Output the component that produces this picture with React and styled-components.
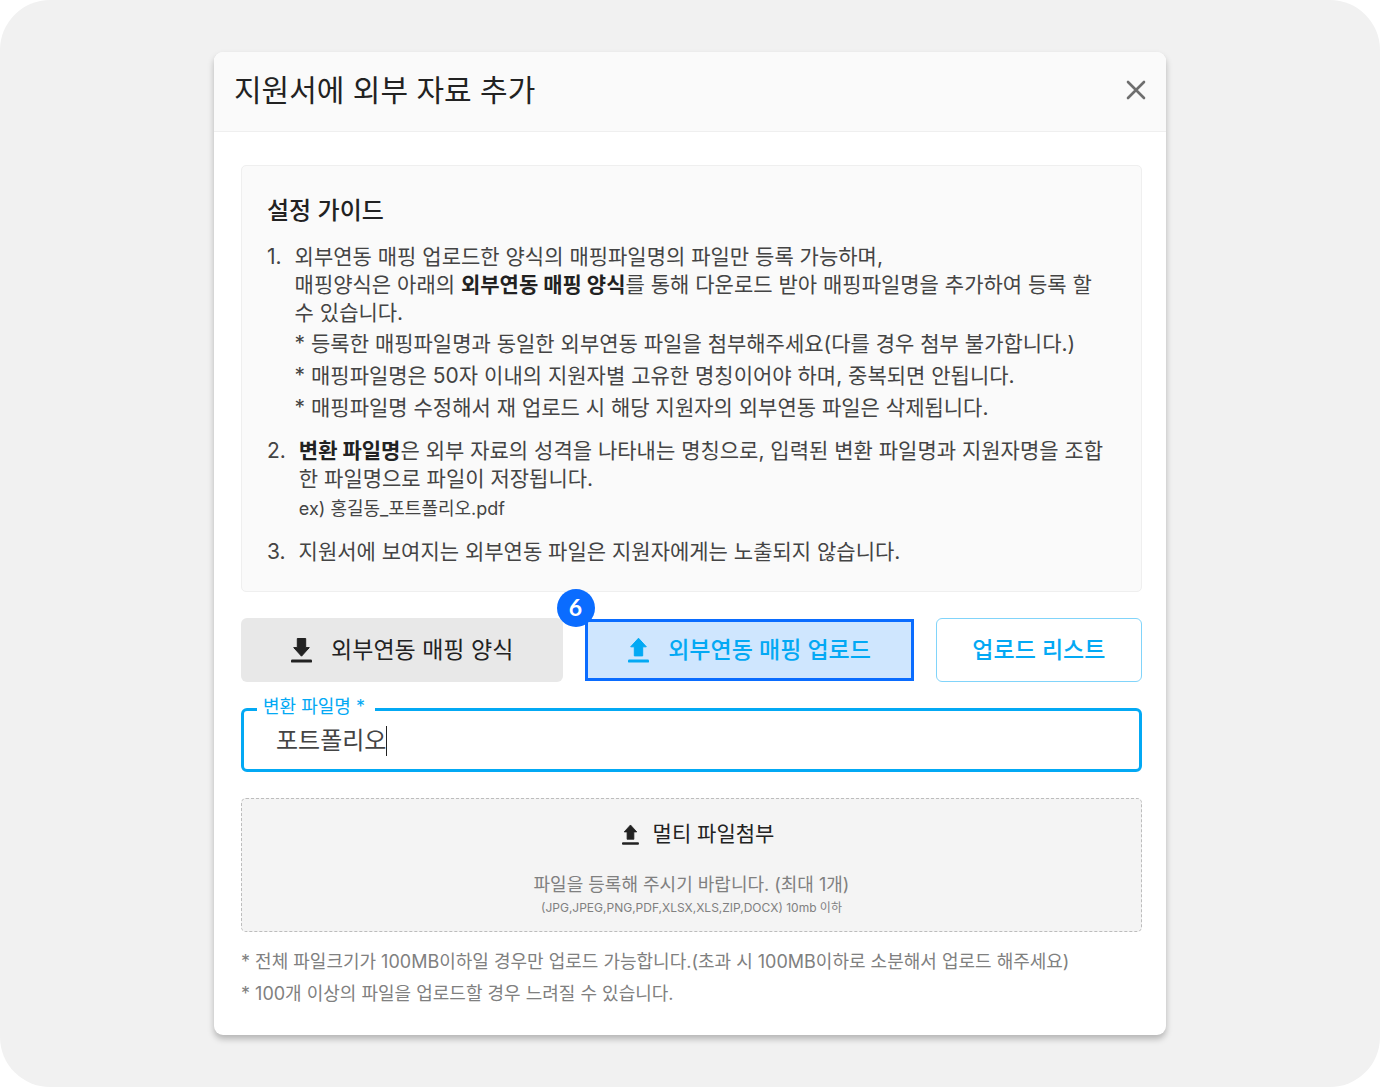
import React, { useState } from "react";
import styled, { createGlobalStyle } from "styled-components";

const GlobalStyle = createGlobalStyle`
  *, *::before, *::after { box-sizing: border-box; }
  body {
    margin: 0;
    background: #fff;
    color: #444;
    font-family: Inter, "Noto Sans CJK KR", sans-serif;
  }
  button, input { font-family: inherit; }
  h1, h2, p, ol { margin: 0; padding: 0; }
`;

const Backdrop = styled.main`
  display: flex;
  justify-content: center;
  align-items: flex-start;
  min-height: 100vh;
  padding: 52px 24px;
  border-radius: 50px;
  background: #f1f1f1;
`;

const Dialog = styled.section`
  width: 100%;
  max-width: 952px;
  border-radius: 9px;
  background: #fff;
  box-shadow: 0 4px 6px rgba(0, 0, 0, 0.25);
`;

const Header = styled.header`
  display: flex;
  justify-content: space-between;
  align-items: center;
  height: 80px;
  padding: 0 14px 4px 20px;
  border-bottom: 1px solid #efefef;
  border-radius: 9px 9px 0 0;
  background: #fafafa;
`;

const Title = styled.h1`
  color: #222;
  font-size: 30px;
  line-height: 40px;
  font-weight: 400;
`;

const CloseButton = styled.button`
  display: flex;
  padding: 4px;
  border: 0;
  background: none;
  color: #6e6e6e;
  cursor: pointer;
`;

const Body = styled.div`
  display: flex;
  flex-direction: column;
  gap: 26px;
  padding: 33px 24px 25px 27px;
`;

const Guide = styled.section`
  padding: 29px 25px 25px;
  border: 1px solid #efefef;
  border-radius: 5px;
  background: #fafafa;
`;

const GuideTitle = styled.h2`
  margin-bottom: 16px;
  color: #222;
  font-size: 24px;
  line-height: 32px;
  font-weight: 500;
`;

const Steps = styled.ol`
  display: flex;
  flex-direction: column;
  gap: 13px;
  list-style: none;
`;

const Step = styled.li`
  display: flex;
  gap: 13px;
  font-size: 21px;
  line-height: 28px;

  b { color: #222; font-weight: 700; }
`;

const Notes = styled.div`
  margin-top: 1px;
`;

const Note = styled.p`
  font-size: ${(p) => (p.$small ? "18px" : "21px")};
  line-height: 32px;
`;

const Actions = styled.div`
  display: grid;
  grid-template-columns: 322fr 328fr 206fr;
  align-items: center;
  gap: 22px;
`;

const variants = {
  filled: `
    height: 64px;
    border: 0;
    background: #e8e8e8;
    color: #222;
    font-weight: 400;
  `,
  marked: `
    height: 62px;
    border: 3px solid #0a6cff;
    border-radius: 0;
    background: #cfe6fe;
  `,
  outlined: `
    height: 64px;
    border: 1px solid #81d4fa;
    background: #fff;
  `,
};

const ActionButton = styled.button`
  position: relative;
  display: flex;
  justify-content: center;
  align-items: center;
  gap: 19px;
  padding: 0;
  border-radius: 6px;
  color: #03a9f4;
  font-size: 23px;
  line-height: 32px;
  font-weight: 500;
  white-space: nowrap;
  cursor: pointer;
  ${(p) => variants[p.$variant]}
`;

const Badge = styled.span`
  position: absolute;
  top: -33px;
  left: -31px;
  width: 38px;
  height: 38px;
  padding-right: 2px;
  border-radius: 50%;
  background: #0a6cff;
  color: #fff;
  font: 700 23px/37px Lato, sans-serif;
  text-align: center;
`;

const Field = styled.div`
  position: relative;
  display: flex;
  align-items: center;
  height: 64px;
  padding: 2px 32px 0;
  border: 3px solid #03a9f4;
  border-radius: 6px;
  cursor: text;
`;

const FieldLabel = styled.label`
  position: absolute;
  top: -16px;
  left: 13px;
  padding: 0 10px 0 6px;
  background: #fff;
  color: #03a9f4;
  font-size: 18px;
  line-height: 24px;
`;

const FieldInput = styled.input`
  field-sizing: content;
  padding: 0;
  border: 0;
  outline: 0;
  background: none;
  color: #444;
  caret-color: transparent;
  font-size: 24px;
  line-height: 32px;
`;

const Caret = styled.span`
  width: 1px;
  height: 30px;
  background: #222;
`;

const DropZone = styled.div`
  display: flex;
  flex-direction: column;
  align-items: center;
  padding: 19px 0 12px;
  border: 1px dashed #bdbdbd;
  border-radius: 5px;
  background: #f4f4f4;
  color: #808080;
`;

const AttachButton = styled.button`
  display: flex;
  align-items: center;
  gap: 14px;
  margin-bottom: 23px;
  padding: 0 0 0 13px;
  border: 0;
  background: none;
  color: #222;
  font-size: 21px;
  line-height: 32px;
  font-weight: 400;
  cursor: pointer;
`;

const Hint = styled.p`
  font-size: ${(p) => (p.$small ? "12px" : "18px")};
  line-height: ${(p) => (p.$small ? "22px" : "24px")};
`;

const Footnotes = styled.div`
  margin-top: -12px;
  color: #808080;
  font-size: 18px;
  line-height: 32px;
`;

function CloseIcon() {
  return (
    <svg width="24" height="24" viewBox="0 0 24 24" fill="none" stroke="currentColor" strokeWidth="2.6" strokeLinecap="round" aria-hidden="true">
      <path d="M4 4 L20 20 M20 4 L4 20" />
    </svg>
  );
}

function ArrowIcon({ up, size = 26 }) {
  return (
    <svg width={(size * 21) / 26} height={size} viewBox="0 0 21 26" fill="currentColor" stroke="currentColor" strokeLinejoin="round" aria-hidden="true">
      <path d={up ? "M10.5 1.2 L18.3 9.8 H14.7 V18.9 H6.3 V9.8 H2.7 Z" : "M10.5 19.2 L18.3 10.6 H14.7 V1.5 H6.3 V10.6 H2.7 Z"} />
      <rect x="0" y="22.6" width="21" height="3" rx="1.2" stroke="none" />
    </svg>
  );
}

export default function App() {
  const [fileName, setFileName] = useState("포트폴리오");

  return (
    <>
      <GlobalStyle />
      <Backdrop>
        <Dialog role="dialog" aria-labelledby="dialog-title">
          <Header>
            <Title id="dialog-title">지원서에 외부 자료 추가</Title>
            <CloseButton type="button" aria-label="닫기">
              <CloseIcon />
            </CloseButton>
          </Header>
          <Body>
            <Guide>
              <GuideTitle>설정 가이드</GuideTitle>
              <Steps>
                <Step>
                  <span>1.</span>
                  <div>
                    <p>
                      외부연동 매핑 업로드한 양식의 매핑파일명의 파일만 등록 가능하며,
                      <br />
                      매핑양식은 아래의 <b>외부연동 매핑 양식</b>를 통해 다운로드 받아 매핑파일명을 추가하여 등록 할 수 있습니다.
                    </p>
                    <Notes>
                      <Note>* 등록한 매핑파일명과 동일한 외부연동 파일을 첨부해주세요(다를 경우 첨부 불가합니다.)</Note>
                      <Note>* 매핑파일명은 50자 이내의 지원자별 고유한 명칭이어야 하며, 중복되면 안됩니다.</Note>
                      <Note>* 매핑파일명 수정해서 재 업로드 시 해당 지원자의 외부연동 파일은 삭제됩니다.</Note>
                    </Notes>
                  </div>
                </Step>
                <Step>
                  <span>2.</span>
                  <div>
                    <p>
                      <b>변환 파일명</b>은 외부 자료의 성격을 나타내는 명칭으로, 입력된 변환 파일명과 지원자명을 조합한 파일명으로 파일이 저장됩니다.
                    </p>
                    <Note $small>ex) 홍길동_포트폴리오.pdf</Note>
                  </div>
                </Step>
                <Step>
                  <span>3.</span>
                  <p>지원서에 보여지는 외부연동 파일은 지원자에게는 노출되지 않습니다.</p>
                </Step>
              </Steps>
            </Guide>

            <Actions>
              <ActionButton type="button" $variant="filled">
                <ArrowIcon />
                외부연동 매핑 양식
              </ActionButton>
              <ActionButton type="button" $variant="marked">
                <ArrowIcon up />
                외부연동 매핑 업로드
                <Badge>6</Badge>
              </ActionButton>
              <ActionButton type="button" $variant="outlined">업로드 리스트</ActionButton>
            </Actions>

            <Field>
              <FieldLabel htmlFor="file-name">변환 파일명 *</FieldLabel>
              <FieldInput id="file-name" value={fileName} onChange={(e) => setFileName(e.target.value)} />
              <Caret />
            </Field>

            <DropZone>
              <AttachButton type="button">
                <ArrowIcon up size={21} />
                멀티 파일첨부
              </AttachButton>
              <Hint>파일을 등록해 주시기 바랍니다. (최대 1개)</Hint>
              <Hint $small>(JPG,JPEG,PNG,PDF,XLSX,XLS,ZIP,DOCX) 10mb 이하</Hint>
            </DropZone>

            <Footnotes>
              <p>* 전체 파일크기가 100MB이하일 경우만 업로드 가능합니다.(초과 시 100MB이하로 소분해서 업로드 해주세요)</p>
              <p>* 100개 이상의 파일을 업로드할 경우 느려질 수 있습니다.</p>
            </Footnotes>
          </Body>
        </Dialog>
      </Backdrop>
    </>
  );
}
